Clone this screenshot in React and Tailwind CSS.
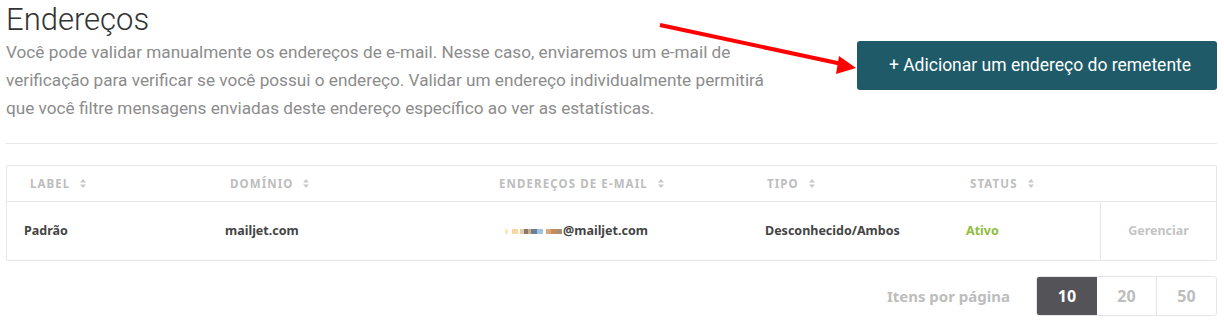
import React from 'react';

const SortIcon = () => (
  <svg className="inline-block ml-[10px] -mt-[2px]" width="6" height="9" viewBox="0 0 6 9" fill="#c8c8c8">
    <path d="M3 0L6 3.5H0z" />
    <path d="M3 9L0 5.5H6z" />
  </svg>
);

const headers = [
  { label: 'Label', cls: 'pl-[23px]' },
  { label: 'Domínio', cls: 'pl-[23px]' },
  { label: 'Endereços de e-mail', cls: 'pl-[12px]' },
  { label: 'Tipo', cls: 'pl-[20px]' },
  { label: 'Status', cls: 'pl-[22px]' },
];

// blurred bits in front of the e-mail address
const blur = [
  ['#fbe7b8', 3], ['#ffffff', 4], ['#f6d8a0', 6], ['#ffffff', 2], ['#e7cba0', 4], ['#8a7a6a', 4],
  ['#c9b08e', 3], ['#6d7f95', 6], ['#9cc5e4', 6], ['#ffffff', 3], ['#d9a679', 5], ['#c58d5d', 6],
  ['#a88f77', 5],
];

export default function App() {
  return (
    <div className="relative w-[1224px] h-[321px] bg-white overflow-hidden pl-[6px] pr-[7px]" style={{ fontFamily: 'Roboto, "Liberation Sans", sans-serif' }}>
      {/* Intro */}
      <div className="flex justify-between items-start">
        <div className="w-[780px] pt-[2px]">
          <h1 className="text-[31px] leading-[36px] font-light text-[#333]">Endereços</h1>
          <p className="text-[17.2px] leading-[28px] text-[#8c8c8c]">
            Você pode validar manualmente os endereços de e-mail. Nesse caso, enviaremos um e-mail de verificação para verificar se você possui o endereço. Validar um endereço individualmente permitirá que você filtre mensagens enviadas deste endereço específico ao ver as estatísticas.
          </p>
        </div>
        <button className="mt-[41px] w-[360px] h-[49px] rounded-[3px] bg-[#1e5a68] text-white text-[17.5px] pl-[6px]">
          + Adicionar um endereço do remetente
        </button>
      </div>

      <div className="mt-[21px] border-t border-[#e6e6e6]" />

      {/* Table */}
      <div className="mt-[21px] border border-[#e6e6e6] rounded-[2px]" style={{ fontFamily: '"Noto Sans", "Open Sans", sans-serif' }}>
        <div className="grid grid-cols-[200px_280px_260px_201px_152px_1fr] h-[36px] items-center border-b border-[#e6e6e6]">
          {headers.map((h) => (
            <div key={h.label} className={`${h.cls} text-[11.5px] font-bold uppercase tracking-[1.1px] text-[#bdbdbd]`}>
              {h.label}
              <SortIcon />
            </div>
          ))}
          <div />
        </div>
        <div className="grid grid-cols-[200px_280px_260px_201px_152px_1fr] h-[58px] items-center text-[12.5px] font-bold text-[#444]">
          <div className="pl-[17px]">Padrão</div>
          <div className="pl-[18px]">mailjet.com</div>
          <div className="pl-[18px] flex items-center">
            <span className="flex items-center h-[5px] mr-[1px] mt-[1px]">
              {blur.map(([c, w], i) => (
                <span key={i} className="h-full" style={{ background: c, width: w }} />
              ))}
            </span>
            <span>@mailjet.com</span>
          </div>
          <div className="pl-[18px]">Desconhecido/Ambos</div>
          <div className="pl-[18px] text-[#8dbe3a]">Ativo</div>
          <div className="h-full border-l border-[#e6e6e6] flex items-center justify-center text-[#c4c4c4]">Gerenciar</div>
        </div>
      </div>

      {/* Pagination */}
      <div className="mt-[15px] flex justify-end items-center" style={{ fontFamily: '"Noto Sans", "Open Sans", sans-serif' }}>
        <span className="text-[15px] font-bold text-[#bdbdbd] mr-[26px]">Itens por página</span>
        <div className="flex h-[40px] border border-[#e6e6e6] rounded-[3px] overflow-hidden text-[16px] font-bold">
          <div className="w-[60px] flex items-center justify-center bg-[#545458] text-white">10</div>
          <div className="w-[60px] flex items-center justify-center text-[#bdbdbd] border-r border-[#e6e6e6]">20</div>
          <div className="w-[59px] flex items-center justify-center text-[#bdbdbd]">50</div>
        </div>
      </div>

      {/* annotation arrow */}
      <svg className="absolute left-0 top-0 pointer-events-none" width="1224" height="321">
        <line x1="660" y1="25" x2="842" y2="64" stroke="#f00" strokeWidth="4" />
        <polygon points="856,68 839,56 836,74" fill="#f00" />
      </svg>
    </div>
  );
}
